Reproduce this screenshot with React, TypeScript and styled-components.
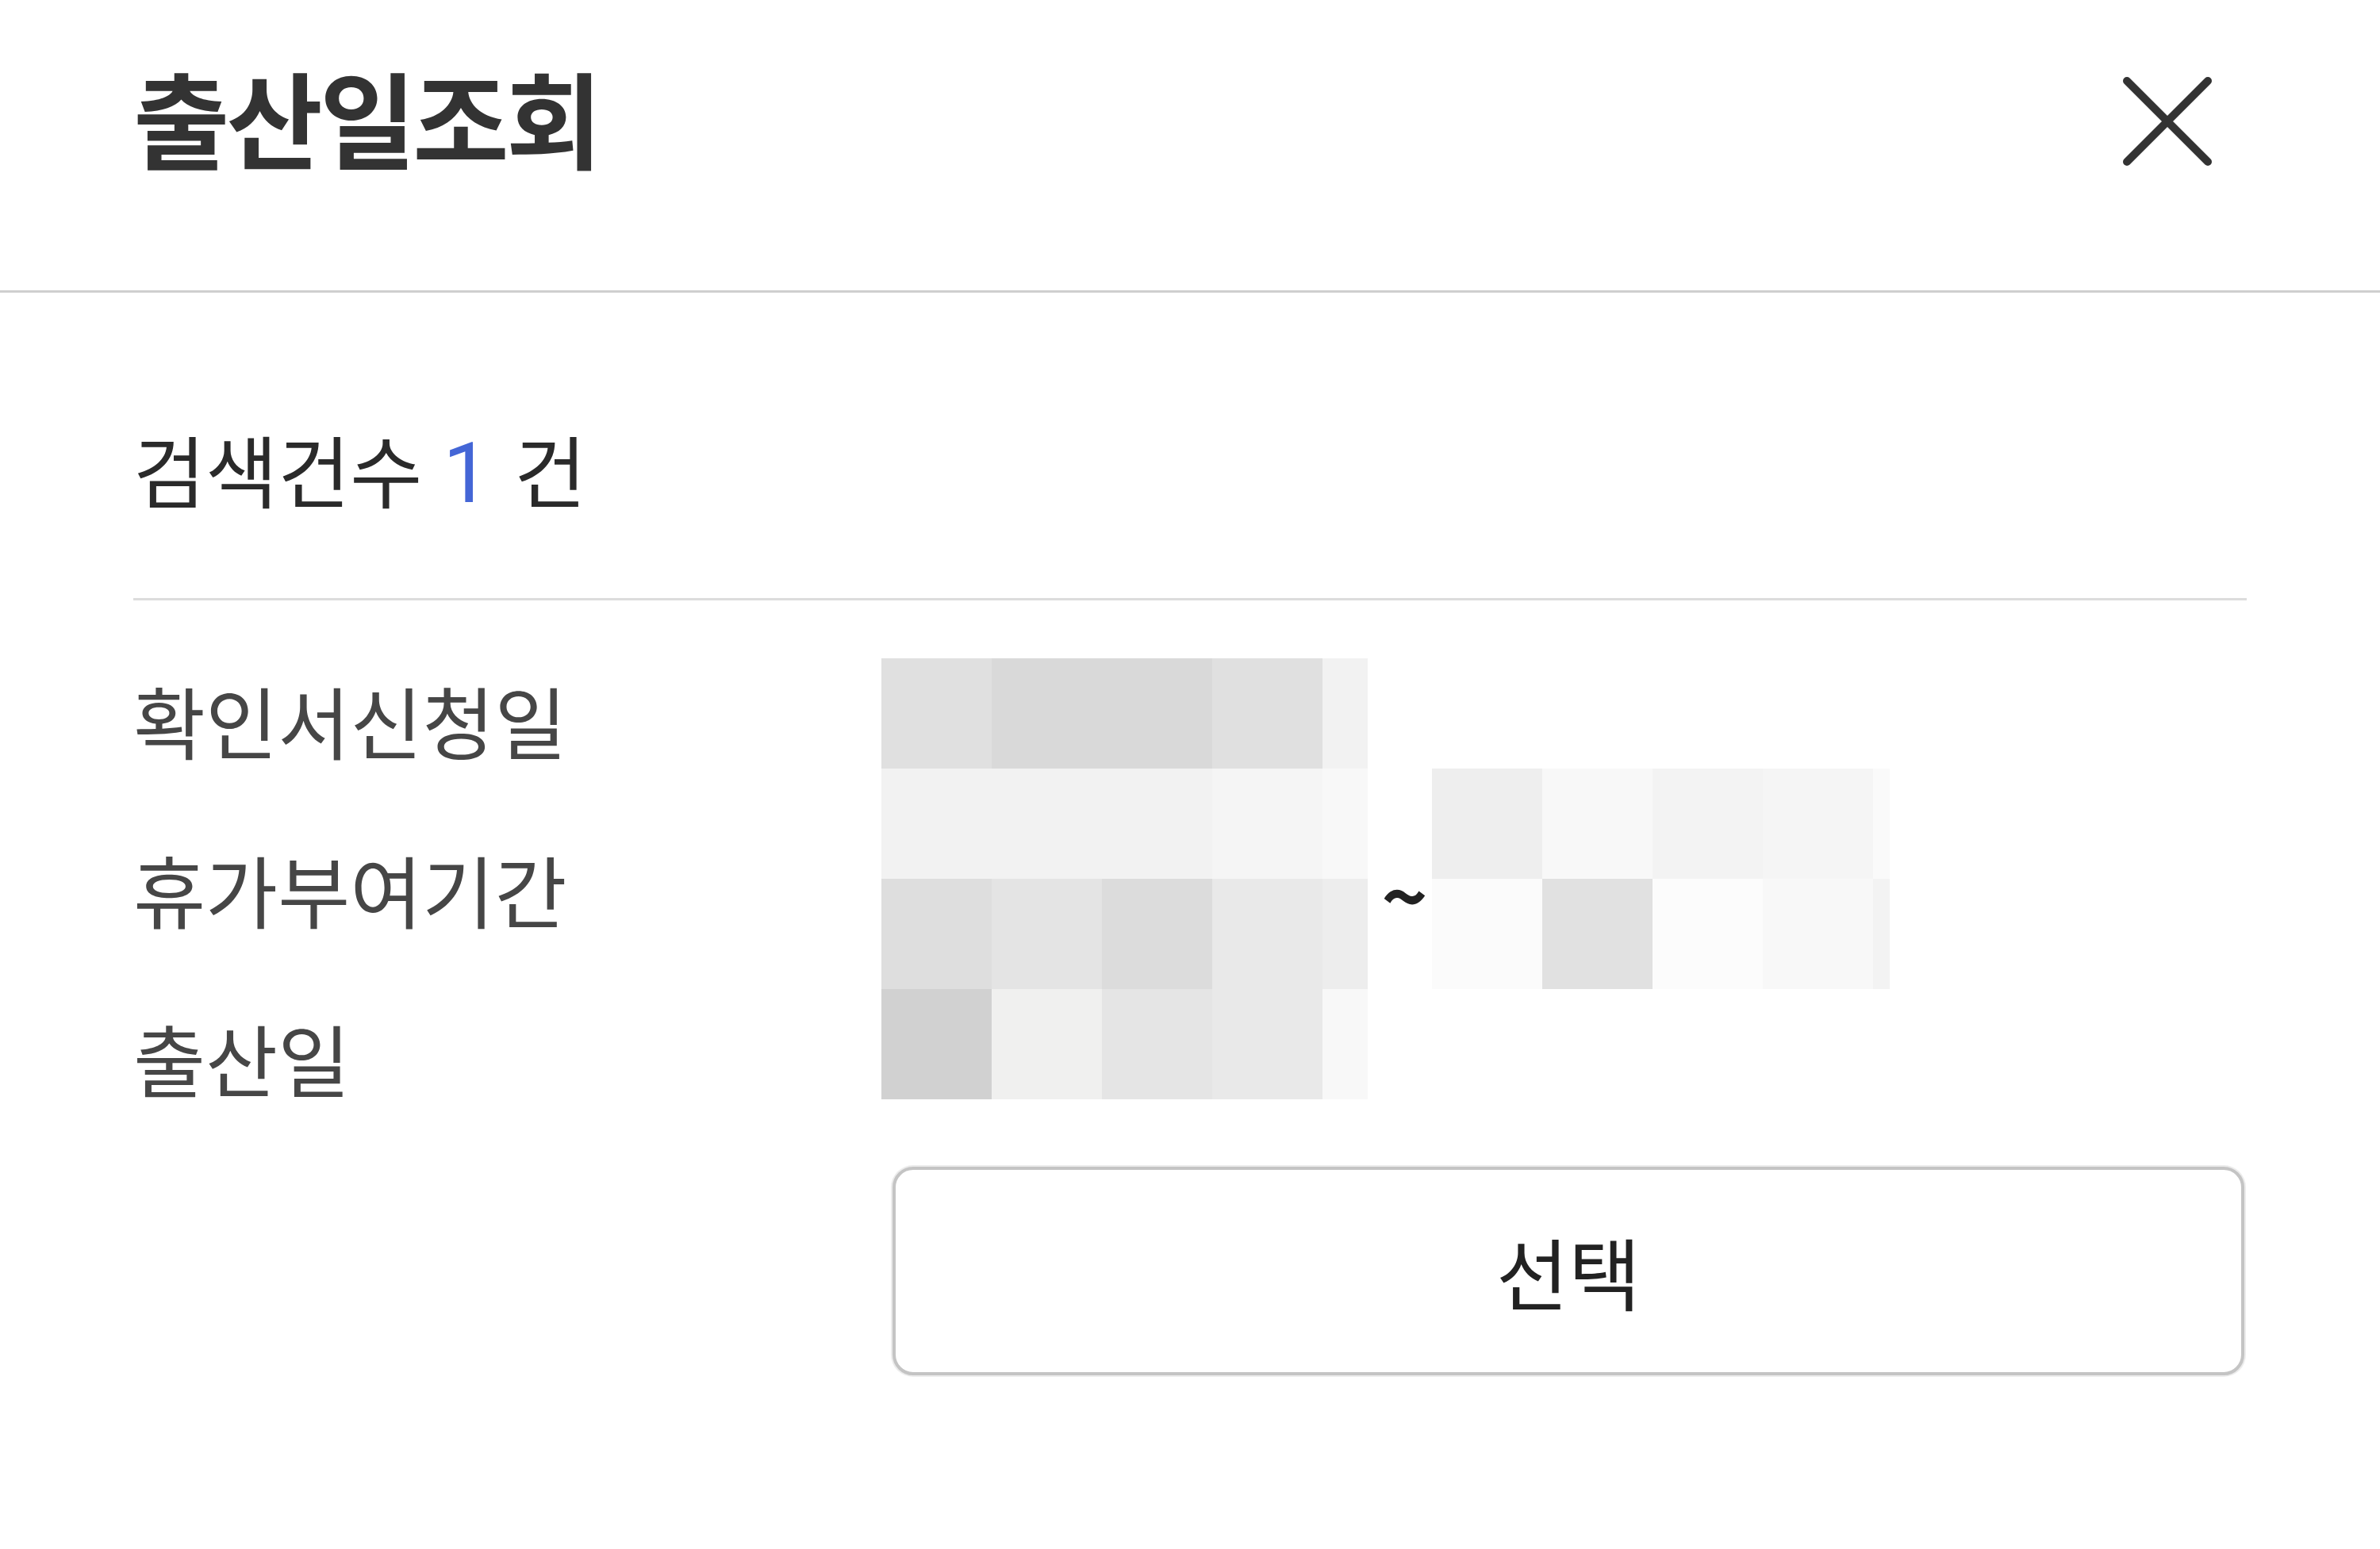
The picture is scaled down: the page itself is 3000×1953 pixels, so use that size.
import React from "react";
import styled, { createGlobalStyle } from "styled-components";

const GlobalStyle = createGlobalStyle`
  html, body {
    margin: 0;
    padding: 0;
    background: #ffffff;
  }
  body {
    font-family: "Noto Sans CJK KR", "Noto Sans", sans-serif;
    color: #333333;
  }
  * { box-sizing: border-box; }
`;

const Page = styled.div`
  width: 3000px;
  min-height: 1953px;
  background: #ffffff;
  display: flex;
  flex-direction: column;
`;

const Header = styled.header`
  height: 369px;
  padding: 80px 168px 0;
  display: flex;
  align-items: flex-start;
  justify-content: space-between;
  border-bottom: 3px solid #cfcfcf;
`;

const Title = styled.h1`
  margin: 0;
  font-size: 132px;
  line-height: 132px;
  font-weight: 700;
  letter-spacing: -4px;
  color: #333333;
`;

const CloseButton = styled.button`
  width: 200px;
  height: 146px;
  padding: 0;
  border: none;
  background: transparent;
  display: flex;
  align-items: center;
  justify-content: center;
  cursor: pointer;
`;

const Body = styled.main`
  padding: 0 168px;
  display: flex;
  flex-direction: column;
`;

const CountRow = styled.div`
  height: 388px;
  padding-top: 172px;
  font-size: 99px;
  line-height: 99px;
  color: #2a2a2a;
  border-bottom: 3px solid #dcdcdc;
`;

const CountNumber = styled.span`
  font-family: Roboto, "Noto Sans", sans-serif;
  font-weight: 400;
  font-size: 106px;
  color: #4466d6;
  margin: 0 30px 0 26px;
`;

const DetailGrid = styled.section`
  display: grid;
  grid-template-columns: 943px 1fr;
  padding-top: 44px;
`;

const LabelList = styled.div`
  display: flex;
  flex-direction: column;
`;

const Label = styled.div`
  height: 213px;
  display: flex;
  align-items: center;
  font-size: 99px;
  line-height: 99px;
  color: #464646;
`;

const ValueArea = styled.div`
  padding-top: 29px;
`;

const MosaicRow = styled.div`
  display: flex;
  align-items: flex-start;
`;

const Mosaic = styled.div<{ $cols: string; $offset?: number }>`
  display: grid;
  grid-template-columns: ${(p) => p.$cols};
  grid-auto-rows: 139px;
  margin-top: ${(p) => p.$offset ?? 0}px;
`;

const MosaicCell = styled.div<{ $shade: string }>`
  background: ${(p) => p.$shade};
`;

const TildeSlot = styled.div`
  width: 81px;
  height: 556px;
  display: flex;
  align-items: center;
  justify-content: center;
  padding: 34px 0 0 12px;
  font-size: 99px;
  line-height: 99px;
  font-weight: 700;
  color: #222222;
`;

const ButtonRow = styled.div`
  display: grid;
  grid-template-columns: 943px 1fr;
  margin-top: 31px;
`;

const SelectButton = styled.button`
  grid-column: 2;
  margin: 0 3px 0 14px;
  height: 263px;
  border: 4px solid #c4c4c4;
  border-radius: 26px;
  background: #ffffff;
  box-shadow: 0 0 0 2px #ececec;
  font-family: "Noto Sans CJK KR", "Noto Sans", sans-serif;
  font-size: 99px;
  line-height: 99px;
  color: #222222;
  cursor: pointer;
`;

const leftMosaic = [
  ["#e0e0e0", "#d9d9d9", "#d9d9d9", "#e0e0e0", "#f2f2f2"],
  ["#f2f2f2", "#f2f2f2", "#f2f2f2", "#f5f5f5", "#f8f8f8"],
  ["#dedede", "#e4e4e4", "#dcdcdc", "#e9e9e9", "#ededed"],
  ["#d1d1d1", "#f0f0ef", "#e5e5e5", "#e9e9e9", "#f8f8f8"],
];

const rightMosaic = [
  ["#eeeeee", "#f8f8f8", "#f3f3f3", "#f5f5f5", "#fafafa"],
  ["#fbfbfb", "#e1e1e1", "#fcfcfc", "#f8f8f8", "#f3f3f3"],
];

const CloseIcon = () => (
  <svg width="112" height="112" viewBox="0 0 112 112" aria-hidden="true">
    <path
      d="M5 5 L107 107 M107 5 L5 107"
      stroke="#333333"
      strokeWidth="10"
      strokeLinecap="round"
      fill="none"
    />
  </svg>
);

export default function App() {
  const labels = ["확인서신청일", "휴가부여기간", "출산일"];
  return (
    <>
      <GlobalStyle />
      <Page>
        <Header>
          <Title>출산일조회</Title>
          <CloseButton aria-label="닫기">
            <CloseIcon />
          </CloseButton>
        </Header>
        <Body>
          <CountRow>
            검색건수<CountNumber>1</CountNumber>건
          </CountRow>
          <DetailGrid>
            <LabelList>
              {labels.map((l) => (
                <Label key={l}>{l}</Label>
              ))}
            </LabelList>
            <ValueArea>
              <MosaicRow>
                <Mosaic $cols="repeat(4, 139px) 57px">
                  {leftMosaic.flat().map((c, i) => (
                    <MosaicCell key={i} $shade={c} />
                  ))}
                </Mosaic>
                <TildeSlot>~</TildeSlot>
                <Mosaic $cols="repeat(4, 139px) 21px" $offset={139}>
                  {rightMosaic.flat().map((c, i) => (
                    <MosaicCell key={i} $shade={c} />
                  ))}
                </Mosaic>
              </MosaicRow>
            </ValueArea>
          </DetailGrid>
          <ButtonRow>
            <SelectButton>선택</SelectButton>
          </ButtonRow>
        </Body>
      </Page>
    </>
  );
}
